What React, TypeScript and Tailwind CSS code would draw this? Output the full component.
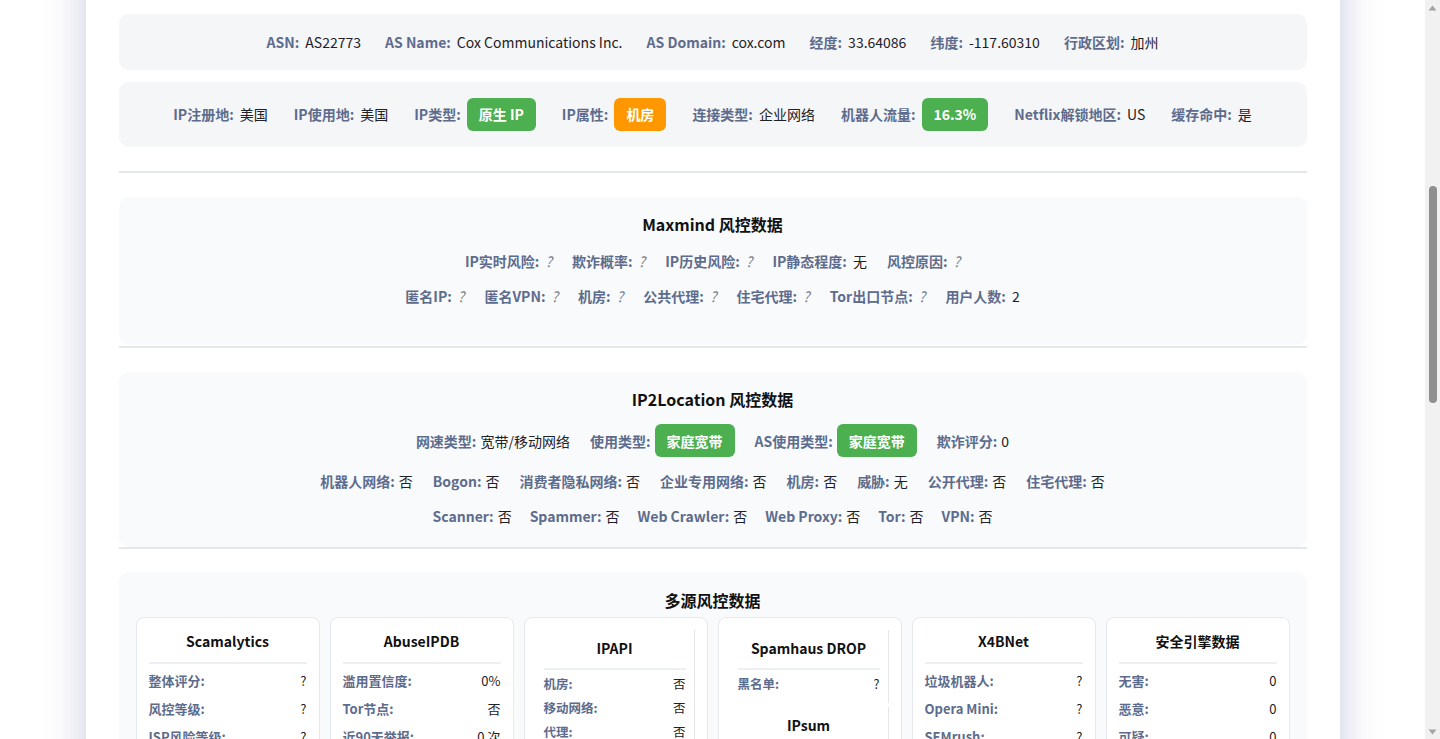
import React, { useLayoutEffect } from "react";

const FONT = { fontFamily: '"Noto Sans CJK SC", "Noto Sans", sans-serif' };

function L({ children }: { children: React.ReactNode }) {
  return <span className="font-bold text-[#5d6c8d]">{children}</span>;
}

function Item({ label, children, tight }: { label: string; children: React.ReactNode; tight?: boolean }) {
  return (
    <div className={"flex items-center whitespace-nowrap " + (tight ? "gap-1" : "gap-[6px]")}>
      <L>{label}</L>
      {children}
    </div>
  );
}

function V({ children }: { children: React.ReactNode }) {
  return <span className="text-[#1f2124] slashed-zero">{children}</span>;
}

function Q() {
  return <span className="italic text-[#7a7f88]">?</span>;
}

function Badge({ color, children }: { color: string; children: React.ReactNode }) {
  return (
    <span
      className={
        "inline-flex h-[33px] items-center rounded-[6px] px-3 font-bold text-white " +
        (color === "green" ? "bg-[#4caf50]" : "bg-[#ff9800]")
      }
    >
      {children}
    </span>
  );
}

function Row({ children, className = "" }: { children: React.ReactNode; className?: string }) {
  return (
    <div className={"flex flex-wrap items-center justify-center gap-x-5 text-[14px] leading-5 " + className}>
      {children}
    </div>
  );
}

function Divider() {
  return <div className="mb-6 h-[2px] bg-[#e4e7ec]" />;
}

function CardRow({ label, value }: { label: string; value: string }) {
  return (
    <div className="flex h-7 items-center justify-between text-[13px]">
      <span className="font-bold text-[#5d6c8d]">{label}</span>
      <span className="text-[#1f2124] slashed-zero">{value}</span>
    </div>
  );
}

function SubRow({ label, value }: { label: string; value: string }) {
  return (
    <div className="flex h-6 items-center justify-between text-[12.5px]">
      <span className="font-bold text-[#5d6c8d]">{label}</span>
      <span className="text-[#1f2124] slashed-zero">{value}</span>
    </div>
  );
}

function Card({ title, rows }: { title: string; rows: [string, string][] }) {
  return (
    <div className="rounded-lg border border-[#e5e8ee] bg-white px-3 pb-3 pt-[13px]">
      <div className="border-b-2 border-[#eceff3] pb-[11px] text-center text-[14px] font-bold leading-5 text-[#111]">
        {title}
      </div>
      <div className="mt-[3px]">
        {rows.map(([l, v]) => (
          <CardRow key={l} label={l} value={v} />
        ))}
      </div>
    </div>
  );
}

function SubCard({ title, rows }: { title: string; rows: [string, string][] }) {
  return (
    <div className="border-r border-[#e3e6ec] pb-[7px] pl-[7px] pr-2 pt-2">
      <div className="border-b-2 border-[#eceff3] pb-[10px] text-center text-[14px] font-bold leading-5 text-[#111]">
        {title}
      </div>
      <div className="mt-[2px]">
        {rows.map(([l, v]) => (
          <SubRow key={l} label={l} value={v} />
        ))}
      </div>
    </div>
  );
}

function NestedCard({ subs }: { subs: { title: string; rows: [string, string][] }[] }) {
  return (
    <div className="flex flex-col gap-1 rounded-lg border border-[#e5e8ee] bg-white px-3 pb-3 pt-3">
      {subs.map((s) => (
        <SubCard key={s.title} title={s.title} rows={s.rows} />
      ))}
    </div>
  );
}

function Scrollbar() {
  return (
    <div className="fixed right-0 top-0 flex h-screen w-[15px] flex-col bg-[#f1f1f1]">
      <div className="flex h-[15px] items-center justify-center">
        <svg width="9" height="6" viewBox="0 0 9 6">
          <polygon points="4.5,0.5 8.5,5.5 0.5,5.5" fill="#a3a3a3" />
        </svg>
      </div>
      <div className="flex flex-1 flex-col items-center pt-[171px]">
        <div className="h-[217px] w-[8px] rounded-full bg-[#8f8f8f]" />
      </div>
      <div className="flex h-[15px] items-center justify-center">
        <svg width="9" height="6" viewBox="0 0 9 6">
          <polygon points="0.5,0.5 8.5,0.5 4.5,5.5" fill="#a3a3a3" />
        </svg>
      </div>
    </div>
  );
}

export default function App() {
  useLayoutEffect(() => {
    window.scrollTo(0, 582);
    const t = setTimeout(() => window.scrollTo(0, 582), 50);
    return () => clearTimeout(t);
  }, []);

  return (
    <div className="min-h-screen bg-white pr-[15px]" style={FONT}>
      <div className="mx-auto min-h-[2414px] w-[1254px] bg-white px-[33px] shadow-[0_0_38px_rgba(70,82,160,0.3)]">
        {/* upper part of the report (scrolled out of view) */}
        <div className="mb-6 flex h-[572px] flex-col items-center justify-center gap-3">
          <h1 className="text-[24px] font-bold text-[#111]">IP 质量检测报告</h1>
          <p className="text-[14px] text-[#5d6c8d]">基础信息</p>
        </div>

        {/* basic info */}
        <div className="flex h-[56px] items-center justify-center gap-6 rounded-[10px] bg-[#f5f6f8] text-[14px]">
          <Item label="ASN:"><V>AS22773</V></Item>
          <Item label="AS Name:"><V>Cox Communications Inc.</V></Item>
          <Item label="AS Domain:"><V>cox.com</V></Item>
          <Item label="经度:"><V>33.64086</V></Item>
          <Item label="纬度:"><V>-117.60310</V></Item>
          <Item label="行政区划:"><V>加州</V></Item>
        </div>
        <div className="mt-3 flex h-[65px] items-center justify-center gap-[26px] rounded-[10px] bg-[#f5f6f8] text-[14px]">
          <Item label="IP注册地:"><V>美国</V></Item>
          <Item label="IP使用地:"><V>美国</V></Item>
          <Item label="IP类型:"><Badge color="green">原生 IP</Badge></Item>
          <Item label="IP属性:"><Badge color="orange">机房</Badge></Item>
          <Item label="连接类型:"><V>企业网络</V></Item>
          <Item label="机器人流量:"><Badge color="green">16.3%</Badge></Item>
          <Item label="Netflix解锁地区:"><V>US</V></Item>
          <Item label="缓存命中:"><V>是</V></Item>
        </div>
        <div className="mt-6" />
        <Divider />

        {/* Maxmind */}
        <div className="rounded-[10px] bg-[#f9fafc] pb-[39px] pt-[15px]">
          <h3 className="text-center text-[16px] font-bold leading-6 text-[#111]">Maxmind 风控数据</h3>
          <Row className="mt-[15px]">
            <Item label="IP实时风险:"><Q /></Item>
            <Item label="欺诈概率:"><Q /></Item>
            <Item label="IP历史风险:"><Q /></Item>
            <Item label="IP静态程度:"><V>无</V></Item>
            <Item label="风控原因:"><Q /></Item>
          </Row>
          <Row className="mt-[15px]">
            <Item label="匿名IP:"><Q /></Item>
            <Item label="匿名VPN:"><Q /></Item>
            <Item label="机房:"><Q /></Item>
            <Item label="公共代理:"><Q /></Item>
            <Item label="住宅代理:"><Q /></Item>
            <Item label="Tor出口节点:"><Q /></Item>
            <Item label="用户人数:"><V>2</V></Item>
          </Row>
        </div>
        <div className="mt-[1px]" />
        <Divider />

        {/* IP2Location */}
        <div className="rounded-[10px] bg-[#f9fafc] pb-[21px] pt-[15px]">
          <h3 className="text-center text-[16px] font-bold leading-6 text-[#111]">IP2Location 风控数据</h3>
          <Row className="mt-[13px]">
            <Item tight label="网速类型:"><V>宽带/移动网络</V></Item>
            <Item tight label="使用类型:"><Badge color="green">家庭宽带</Badge></Item>
            <Item tight label="AS使用类型:"><Badge color="green">家庭宽带</Badge></Item>
            <Item tight label="欺诈评分:"><V>0</V></Item>
          </Row>
          <Row className="mt-[14px]">
            <Item tight label="机器人网络:"><V>否</V></Item>
            <Item tight label="Bogon:"><V>否</V></Item>
            <Item tight label="消费者隐私网络:"><V>否</V></Item>
            <Item tight label="企业专用网络:"><V>否</V></Item>
            <Item tight label="机房:"><V>否</V></Item>
            <Item tight label="威胁:"><V>无</V></Item>
            <Item tight label="公开代理:"><V>否</V></Item>
            <Item tight label="住宅代理:"><V>否</V></Item>
          </Row>
          <Row className="mt-[15px] gap-x-[18px]">
            <Item tight label="Scanner:"><V>否</V></Item>
            <Item tight label="Spammer:"><V>否</V></Item>
            <Item tight label="Web Crawler:"><V>否</V></Item>
            <Item tight label="Web Proxy:"><V>否</V></Item>
            <Item tight label="Tor:"><V>否</V></Item>
            <Item tight label="VPN:"><V>否</V></Item>
          </Row>
        </div>
        <div className="mb-[23px] h-[2px] bg-[#e4e7ec]" />

        {/* multi-source */}
        <div className="rounded-[10px] bg-[#f9fafc] px-[17px] pb-5 pt-4">
          <h3 className="text-center text-[16px] font-bold leading-6 text-[#111]">多源风控数据</h3>
          <div className="mt-[5px] grid grid-cols-6 items-start gap-[10px]">
            <Card
              title="Scamalytics"
              rows={[
                ["整体评分:", "?"],
                ["风控等级:", "?"],
                ["ISP风险等级:", "?"],
                ["ISP评分:", "?"],
                ["代理:", "?"],
              ]}
            />
            <Card
              title="AbuseIPDB"
              rows={[
                ["滥用置信度:", "0%"],
                ["Tor节点:", "否"],
                ["近90天举报:", "0 次"],
                ["举报用户:", "0"],
              ]}
            />
            <NestedCard
              subs={[
                {
                  title: "IPAPI",
                  rows: [
                    ["机房:", "否"],
                    ["移动网络:", "否"],
                    ["代理:", "否"],
                    ["Tor:", "否"],
                    ["VPN:", "否"],
                  ],
                },
              ]}
            />
            <NestedCard
              subs={[
                { title: "Spamhaus DROP", rows: [["黑名单:", "?"]] },
                { title: "IPsum", rows: [["黑名单数:", "0"]] },
              ]}
            />
            <Card
              title="X4BNet"
              rows={[
                ["垃圾机器人:", "?"],
                ["Opera Mini:", "?"],
                ["SEMrush:", "?"],
                ["爬虫:", "?"],
              ]}
            />
            <Card
              title="安全引擎数据"
              rows={[
                ["无害:", "0"],
                ["恶意:", "0"],
                ["可疑:", "0"],
                ["未检测:", "0"],
              ]}
            />
          </div>
        </div>
      </div>
      <Scrollbar />
    </div>
  );
}
